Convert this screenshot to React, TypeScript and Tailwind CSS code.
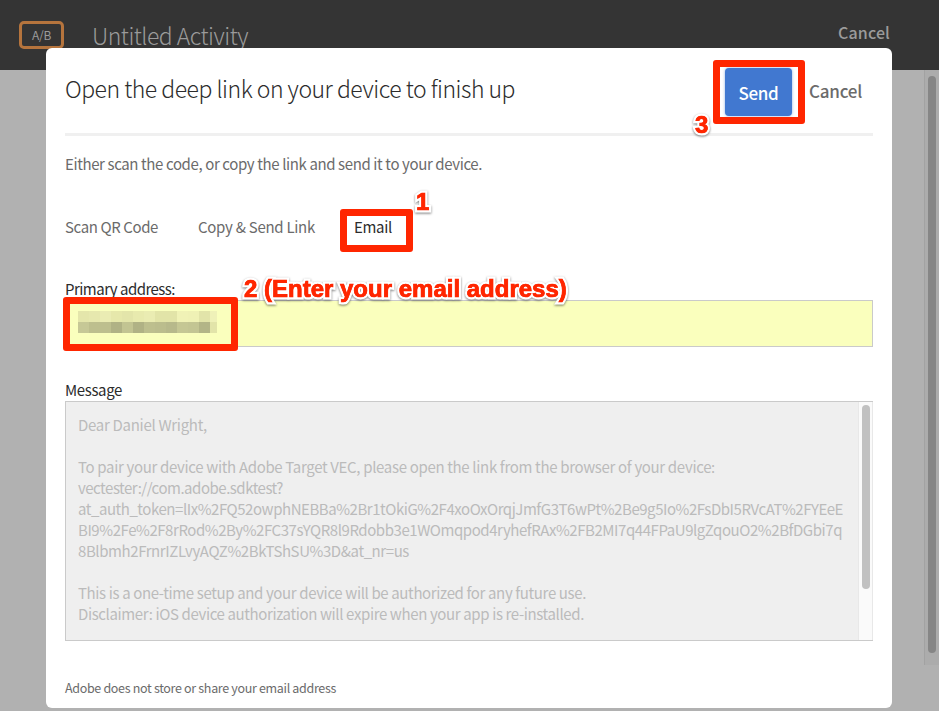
const MOSAIC: string[][] = [
  ['bg-[#e4e6ab]', 'bg-[#e6e8ae]', 'bg-[#eaecb3]', 'bg-[#e6e8ab]', 'bg-[#e3e5aa]', 'bg-[#e8eaae]', 'bg-[#eaecb2]', 'bg-[#e2e4a8]', 'bg-[#e2e4a8]', 'bg-[#f0f2b6]', 'bg-[#eff1b5]', 'bg-[#e2e4a9]', 'bg-[#eff1b8]'],
  ['bg-[#c6c896]', 'bg-[#bdbf8e]', 'bg-[#bdbf8e]', 'bg-[#b0b285]', 'bg-[#c2c492]', 'bg-[#b0b285]', 'bg-[#bdbf8e]', 'bg-[#bbbd8d]', 'bg-[#b7b98b]', 'bg-[#c5c794]', 'bg-[#c3c593]', 'bg-[#b3b587]', 'bg-[#e2e4a9]'],
];

const RED_TEXT =
  "absolute whitespace-nowrap font-['Liberation_Sans',Arial,sans-serif] font-bold leading-none text-[#ff2600] [-webkit-text-stroke:5px_white] [paint-order:stroke_fill] [filter:drop-shadow(0_1px_1px_rgba(0,0,0,0.5))]";

// Thin red outline drawn over the white halo thickens the glyphs.
const RED_FILL = '[-webkit-text-stroke:0.7px_#ff2600] absolute inset-0';

function Note({ place, children }: { place: string; children: string }) {
  return (
    <div className={`${RED_TEXT} ${place} text-[24px]`}>
      {children}
      <span aria-hidden="true" className={RED_FILL}>
        {children}
      </span>
    </div>
  );
}

function TopBar() {
  return (
    <header className="flex h-[70px] items-start justify-between bg-[#343434] pl-[19px] pr-[49px] text-[#9b9b9b]">
      <div className="flex">
        <div className="mt-[21px] flex h-7 w-[45px] items-center justify-center rounded-[5px] border-[3px] border-[#b5743d] text-xs leading-none tracking-[-0.297px]">
          A/B
        </div>
        <h1 className="ml-[28px] mt-[19px] h-8 whitespace-nowrap text-[23px] font-light leading-8 tracking-[-0.512px]">
          Untitled Activity
        </h1>
      </div>
      <button className="mt-[22px] h-5 text-[16px] font-medium leading-5 tracking-[0.133px]">Cancel</button>
    </header>
  );
}

function PageScroll() {
  return (
    <div className="flex h-[595px] w-[15px] justify-center border-l border-[#a2a2a2] bg-[#acacac] pt-[6px]">
      <div className="h-[577px] w-2 rounded-full bg-[#868686]" />
    </div>
  );
}

function DialogHeader() {
  return (
    <div className="flex h-[88px] items-start justify-between border-b-[3px] border-[#f0f0f0]">
      <h2 className="mt-[24px] whitespace-nowrap text-[23px] font-light leading-8 tracking-[-0.495px] text-[#2c2c2c]">
        Open the deep link on your device to finish up
      </h2>
      <div className="mr-[11px] flex">
        <button className="mt-5 h-12 w-[67px] rounded-[4px] bg-[#4178d0] text-center text-[17px] font-medium leading-[49px] tracking-[-0.32px] text-white shadow-[0_0_3px_rgba(65,120,208,0.6)]">
          Send
        </button>
        <button className="ml-[17px] mt-[33px] h-5 text-[17px] font-medium leading-5 tracking-[-0.234px] text-[#6b6b6b]">
          Cancel
        </button>
      </div>
    </div>
  );
}

function Tabs() {
  return (
    <nav className="mt-[43px] flex h-5 whitespace-nowrap text-[15px] leading-5 text-[#6b6b6b]">
      <span className="w-[133px] tracking-[-0.389px]">Scan QR Code</span>
      <span className="w-[156px] tracking-[-0.275px]">Copy &amp; Send Link</span>
      <span className="tracking-[-0.313px] text-[#2c2c2c]">Email</span>
    </nav>
  );
}

function AddressField() {
  return (
    <section className="mt-[42px] text-[15px] leading-5 text-[#2c2c2c]">
      <label className="block h-[21px] tracking-[-0.527px]">Primary address:</label>
      <div className="h-[47px] border border-[#cacaca] bg-[#faffbd] pl-3 pt-[10px]">
        {MOSAIC.map((row, y) => (
          <div key={y} className="flex h-[11px]">
            {row.map((tone, x) => (
              <div key={x} className={`${x === 12 ? 'w-[7px]' : 'w-[11px]'} ${tone}`} />
            ))}
          </div>
        ))}
      </div>
    </section>
  );
}

function MessageField() {
  return (
    <section className="mt-[33px] text-[15px]">
      <label className="block h-[21px] leading-5 tracking-[-0.362px] text-[#2c2c2c]">Message</label>
      <div className="flex h-[240px] justify-between border-y border-l border-[#cacaca] bg-[#efefef]">
        <div className="whitespace-pre pl-[12px] pt-[12px] leading-[21px] text-[#bbbbbb]">
          <p className="h-[42px] tracking-[-0.295px]">Dear Daniel Wright,</p>
          <p className="h-[21px] tracking-[-0.33px]">
            To pair your device with Adobe Target VEC, please open the link from the browser of your device:
          </p>
          <p className="h-[21px] tracking-[-0.481px]">vectester://com.adobe.sdktest?</p>
          <p className="h-[21px] tracking-[-0.453px]">
            at_auth_token=lIx%2FQ52owphNEBBa%2Br1tOkiG%2F4xoOxOrqjJmfG3T6wPt%2Be9g5Io%2FsDbI5RVcAT%2FYEeE
          </p>
          <p className="h-[21px] tracking-[-0.438px]">
            BI9%2Fe%2F8rRod%2By%2FC37sYQR8l9Rdobb3e1WOmqpod4ryhefRAx%2FB2MI7q44FPaU9lgZqouO2%2BfDGbi7q
          </p>
          <p className="h-[42px] tracking-[-0.409px]">8Blbmh2FrnrIZLvyAQZ%2BkTShSU%3D&amp;at_nr=us</p>
          <p className="h-[21px] tracking-[-0.367px]">
            This is a one-time setup and your device will be authorized for any future use.
          </p>
          <p className="h-[21px] tracking-[-0.374px]">
            Disclaimer: iOS device authorization will expire when your app is re-installed.
          </p>
        </div>
        <div className="flex w-[15px] justify-center border-x border-[#e8e8e8] bg-[#fafafa] pt-[3px]">
          <div className="h-[184px] w-2 rounded-full bg-[#c1c1c1]" />
        </div>
      </div>
    </section>
  );
}

function Annotations() {
  return (
    <>
      <div className="absolute left-[713px] top-[60px] h-[64px] w-[92px] rounded-[3px] border-[7px] border-[#ff2600]" />
      <div className="absolute left-[340px] top-[209px] h-[43px] w-[73px] rounded-[3px] border-[7px] border-[#ff2600]" />
      <div className="absolute left-[63px] top-[297px] h-[54px] w-[175px] rounded-[3px] border-[7px] border-[#ff2600]" />
      <Note place="left-[416px] top-[190px]">1</Note>
      <Note place="left-[695px] top-[113px]">3</Note>
      <Note place="left-[244px] top-[277px]">2 (Enter your email address)</Note>
    </>
  );
}

export default function App() {
  return (
    <div className="relative h-[711px] w-[939px] overflow-hidden bg-[#b1b1b1] font-['Noto_Sans_CJK_SC','Noto_Sans',sans-serif]">
      <TopBar />
      <div className="flex justify-end">
        <PageScroll />
      </div>
      <main className="absolute left-[46px] top-[48px] h-[660px] w-[846px] rounded-[6px] bg-white px-[19px]">
        <DialogHeader />
        <p className="mt-[18px] h-5 whitespace-nowrap text-[15px] leading-5 tracking-[-0.382px] text-[#6b6b6b]">
          Either scan the code, or copy the link and send it to your device.
        </p>
        <Tabs />
        <AddressField />
        <MessageField />
        <p className="mt-[37px] h-5 text-[12.5px] leading-5 tracking-[-0.323px] text-[#6b6b6b]">
          Adobe does not store or share your email address
        </p>
      </main>
      <Annotations />
    </div>
  );
}
